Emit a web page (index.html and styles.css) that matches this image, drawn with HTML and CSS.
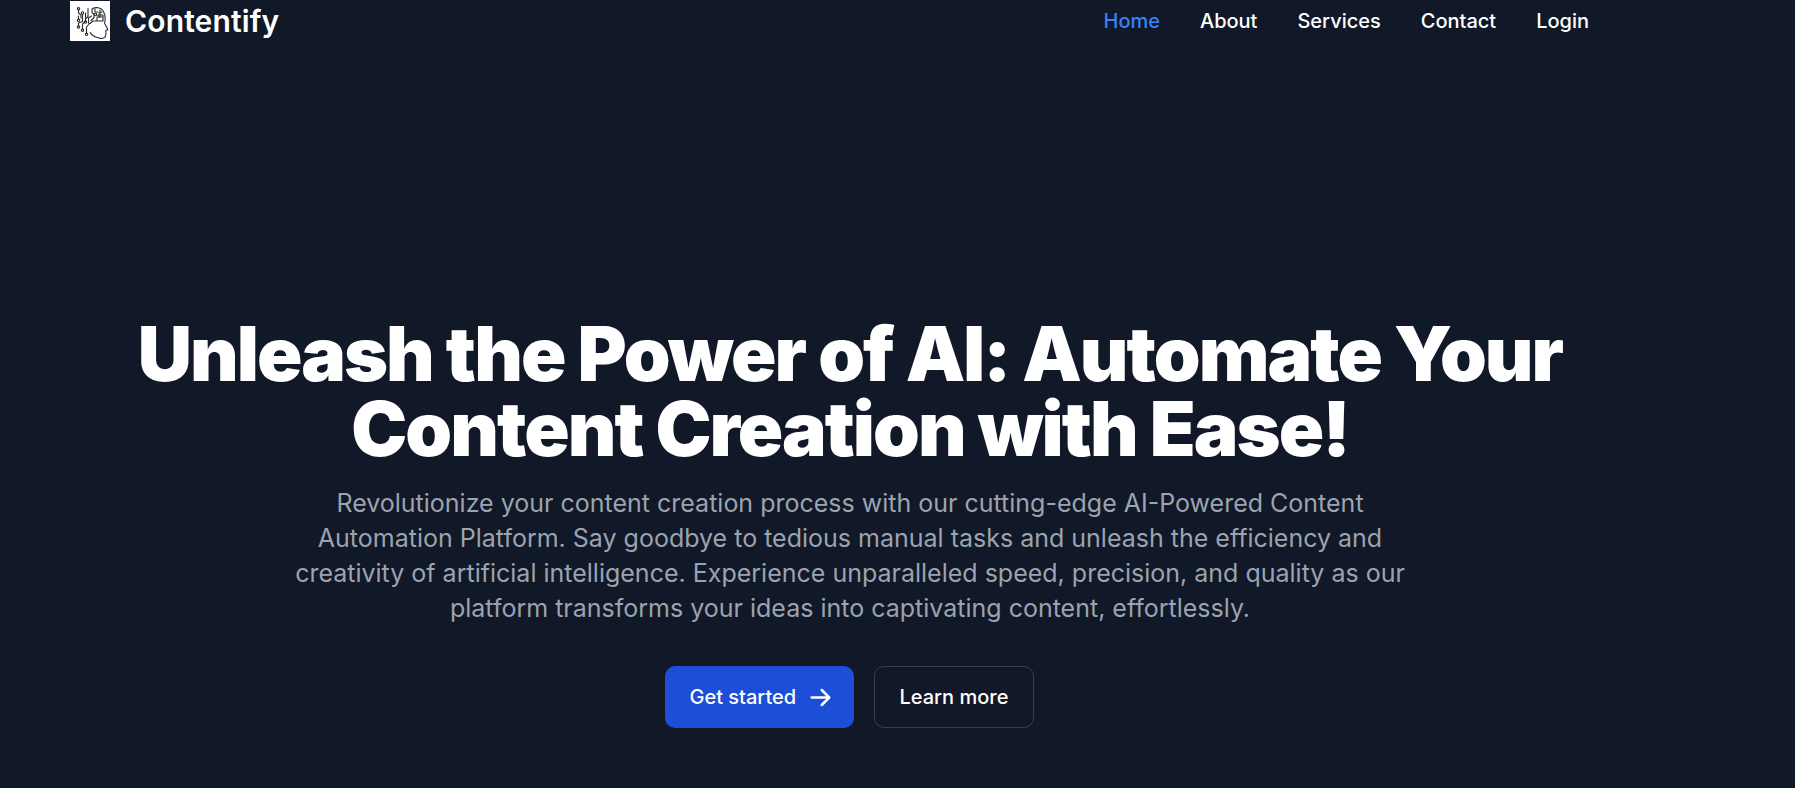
FILE: index.html
```html
<!DOCTYPE html>
<html lang="en">
<head>
<meta charset="utf-8">
<title>Contentify</title>
<link rel="stylesheet" href="styles.css">
</head>
<body>
<header class="navbar">
  <a class="brand" href="#">
    <svg class="brand-logo" viewBox="0 0 40 40" fill="none" stroke="#2b2b2b" stroke-width="1.1" stroke-linecap="round" stroke-linejoin="round">
      <path d="M22 8c4-2.500 9-1.500 11.500 2.500 1.500 2.500 2 5 1.700 8.500l-.7 3 1.500 3 1.800 3.500-2 1.200.2 3.500-1 3c-1.500 1.500-4 1.500-6 .8-4-1-7.500-2.500-8.800-5.500"/>
      <path d="M8.500 9v3l2.500 2v3M12.500 13.500v7l-4 1.500v3M8.500 15v3M15.500 12v8l-3 3v5M16.500 32v-6l3-3.500M18 7.500v8l-2 2M18.500 22v-5l3-2"/>
      <path d="M22 8.500v3l2 2v3l-3 3M25 8v3h3M30 9v5h3v4M20 22.500l3-2.500h4v-4M27 20h6v-4h-4M29 12l3-1"/>
      <circle cx="8.500" cy="7.800" r="1.200"/><circle cx="12.500" cy="12" r="1.200"/><circle cx="8.500" cy="19.300" r="1.200"/><circle cx="8.500" cy="26" r="1.200"/><circle cx="15.500" cy="21" r="1.100"/><circle cx="12.500" cy="29.300" r="1.200"/><circle cx="16.500" cy="33.300" r="1.200"/><circle cx="25.500" cy="13.500" r="1.200"/><circle cx="29" cy="15" r="1.100"/>
    </svg>
    <span class="brand-name">Contentify</span>
  </a>
  <nav class="nav-links">
    <a class="nav-link nav-link-active" href="#">Home</a>
    <a class="nav-link" href="#">About</a>
    <a class="nav-link" href="#">Services</a>
    <a class="nav-link" href="#">Contact</a>
    <a class="nav-link" href="#">Login</a>
  </nav>
</header>
<main class="hero">
  <h1 class="hero-title">Unleash the Power of AI: Automate Your Content Creation with Ease!</h1>
  <p class="hero-text">Revolutionize your content creation process with our cutting-edge AI-Powered Content Automation Platform. Say goodbye to tedious manual tasks and unleash the efficiency and creativity of artificial intelligence. Experience unparalleled speed, precision, and quality as our platform transforms your ideas into captivating content, effortlessly.</p>
  <div class="actions">
    <a class="button button-primary" href="#">Get started
      <svg class="button-icon" viewBox="0 0 20 20" fill="currentColor"><path fill-rule="evenodd" clip-rule="evenodd" d="M10.293 3.293a1 1 0 011.414 0l6 6a1 1 0 010 1.414l-6 6a1 1 0 01-1.414-1.414L14.586 11H3a1 1 0 110-2h11.586l-4.293-4.293a1 1 0 010-1.414z"/></svg>
    </a>
    <a class="button button-outline" href="#">Learn more</a>
  </div>
</main>
</body>
</html>
```
FILE: styles.css
```css
* { box-sizing: border-box; }
html { font-size: 20px; }
body {
  margin: 0;
  min-height: 788px;
  background: #111827;
  color: #fff;
  font-family: Inter, "Liberation Sans", sans-serif;
  line-height: 1.5;
  overflow: hidden;
}
a { color: inherit; text-decoration: none; }
.navbar {
  display: flex;
  align-items: center;
  justify-content: space-between;
  width: 1519px;
  margin-left: 70px;
  height: 42px;
}
.brand { display: flex; align-items: center; gap: 15px; }
.brand-logo { width: 40px; height: 40px; background: #fff; }
.brand-name { font-size: 30px; font-weight: 600; line-height: 40px; letter-spacing: 0.15px; }
.nav-links { display: flex; gap: 40px; }
.nav-link { font-weight: 500; }
.nav-link-active { color: #3b82f6; }
.hero {
  width: 1560px;
  margin-left: 70px;
  padding-top: 274px;
  text-align: center;
}
.hero-title {
  margin: 0 0 20px;
  font-size: 75px;
  line-height: 75px;
  font-weight: 900;
  letter-spacing: -0.0262em;
}
.hero-text {
  margin: 0 0 40px;
  padding: 0 200px;
  font-size: 25px;
  line-height: 35px;
  color: #9ca3af;
}
.actions { display: flex; justify-content: center; gap: 20px; padding-right: 2px; }
.button {
  display: inline-flex;
  align-items: center;
  height: 62px;
  padding: 0 24px;
  border: 1px solid transparent;
  border-radius: 10px;
  font-weight: 500;
}
.button-primary { background: #1d4ed8; width: 189px; }
.button-outline { border-color: #374151; padding-left: 25px; width: 160px; white-space: nowrap; }
.button-icon { width: 25px; height: 25px; margin: 0 -5px 0 12px; }
```
